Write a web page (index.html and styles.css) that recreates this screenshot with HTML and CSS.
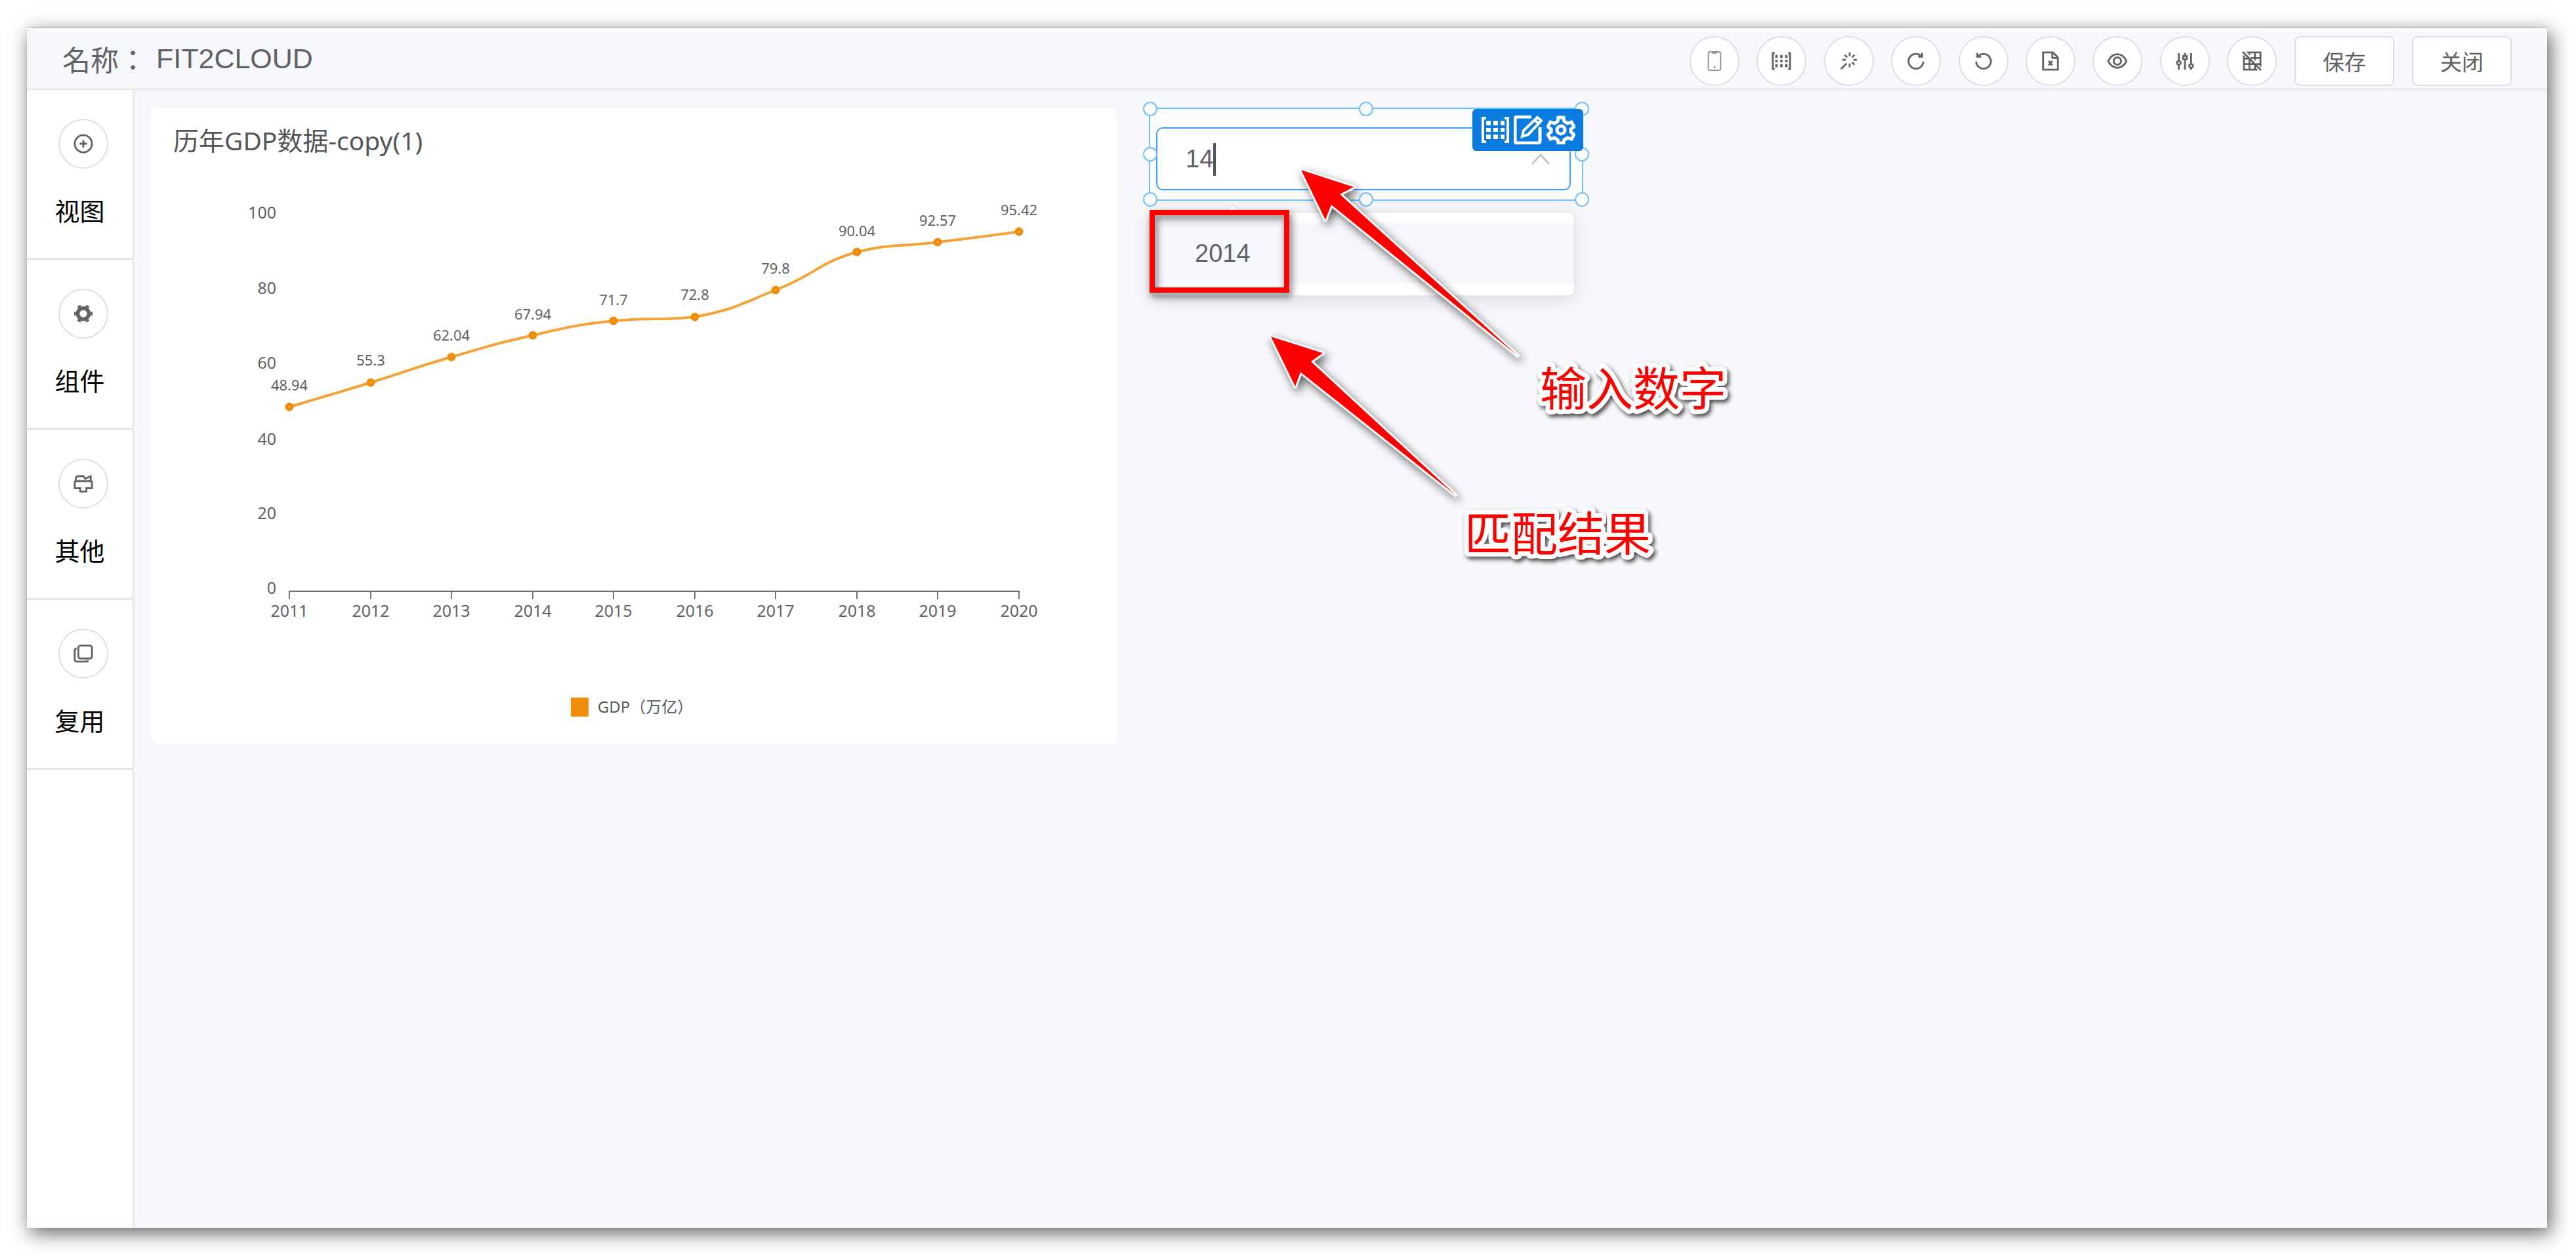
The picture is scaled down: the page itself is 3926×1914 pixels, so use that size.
FILE: index.html
```html
<!DOCTYPE html>
<html lang="zh-CN">
<head>
<meta charset="utf-8">
<meta name="viewport" content="width=device-width, initial-scale=1">
<title>FIT2CLOUD</title>
<link rel="stylesheet" href="styles.css">
</head>
<body>
<div class="window">
  <header class="topbar">
    <h1 class="topbar-title"><span class="topbar-label" lang="zh-TW">名称：</span><span>FIT2CLOUD</span></h1>
    <div class="topbar-tools">
      <div class="tool-group">
        <button class="round-btn" type="button" aria-label="移动端布局">
          <svg class="icon faint" viewBox="0 0 32 32"><rect x="6" y="1" width="20" height="30" rx="3"/><path d="M12 3h8M16 24v4M14.500 26h3"/></svg>
        </button>
        <button class="round-btn" type="button" aria-label="矩阵">
          <svg class="icon" viewBox="0 0 32 32"><path d="M5 3H2v26h3M27 3h3v26h-3"/><path class="solid" d="M6 6h4v5H6zM14 6h4v5h-4zM22 6h4v5h-4zM6 14h4v4H6zM14 14h4v4h-4zM22 14h4v4h-4zM6 21h4v5H6zM14 21h4v5h-4zM22 21h4v5h-4z"/></svg>
        </button>
        <button class="round-btn" type="button" aria-label="美化">
          <svg class="icon" viewBox="0 0 32 32"><path d="M3 29l9-9M17 2v6M17 20v6M5 14h6M23 14h6M9 6l4 4M25 6l-4 4M21 18l4 4"/></svg>
        </button>
        <button class="round-btn" type="button" aria-label="重做">
          <svg class="icon" viewBox="0 0 32 32"><path d="M28 17a12 12 0 1 1-4-9.500M26 3v6h-6"/></svg>
        </button>
        <button class="round-btn" type="button" aria-label="撤销">
          <svg class="icon" viewBox="0 0 32 32"><path d="M4 17a12 12 0 1 0 4-9.500M6 3v6h6"/></svg>
        </button>
        <button class="round-btn" type="button" aria-label="导出">
          <svg class="icon" viewBox="0 0 32 32"><path d="M4 2h16l8 8v20H4zM19 2v9h9M13 16l6 7M19 16l-6 7"/></svg>
        </button>
        <button class="round-btn" type="button" aria-label="预览">
          <svg class="icon" viewBox="0 0 32 32"><path d="M1 16C5 8 10 5 16 5s11 3 15 11c-4 8-9 11-15 11S5 24 1 16z"/><circle cx="16" cy="16" r="6"/></svg>
        </button>
        <button class="round-btn" type="button" aria-label="样式设置">
          <svg class="icon" viewBox="0 0 32 32"><path d="M6 3v13M6 22v8M16 3v5M16 14v16M26 3v18M26 27v3"/><circle cx="6" cy="19" r="3"/><rect x="13" y="8" width="6" height="5"/><circle cx="26" cy="24" r="3"/></svg>
        </button>
        <button class="round-btn" type="button" aria-label="关闭网格">
          <svg class="icon bold" viewBox="0 0 32 32"><path d="M8 2h22v23M3 7v23h22M3 12h8M3 21h17M12 2v4M12 14v16M21 2v13M21 23v7M14 11h16M23 21h7M1 1l30 30"/></svg>
        </button>
      </div>
      <button class="text-btn" type="button">保存</button>
      <button class="text-btn" type="button">关闭</button>
    </div>
  </header>

  <div class="workspace">
    <nav class="sidebar">
      <section class="side-item">
        <button class="round-btn" type="button" aria-labelledby="lab-view">
          <svg class="icon" viewBox="0 0 32 32"><circle cx="16" cy="16" r="14"/><path d="M16 10v12M10 16h12"/></svg>
        </button>
        <span class="side-label" id="lab-view">视图</span>
      </section>
      <section class="side-item">
        <button class="round-btn" type="button" aria-labelledby="lab-part">
          <svg class="icon" viewBox="0 0 32 32"><circle class="cog-ring" cx="16" cy="16" r="9"/><path class="cog-teeth" d="M28 16h3M1 16h3M22 5.600l1.500-2.600M8.500 29l1.500-2.600M22 26.400l1.500 2.600M8.500 3l1.500 2.600"/></svg>
        </button>
        <span class="side-label" id="lab-part">组件</span>
      </section>
      <section class="side-item">
        <button class="round-btn" type="button" aria-labelledby="lab-other">
          <svg class="icon" viewBox="0 0 32 32"><path d="M4 12V7a3 3 0 0 1 3-3h9l3 4 9-4v8M4 12h24a2 2 0 0 1 2 2v9h-9v6H11v-6H2v-9a2 2 0 0 1 2-2z"/></svg>
        </button>
        <span class="side-label" id="lab-other">其他</span>
      </section>
      <section class="side-item">
        <button class="round-btn" type="button" aria-labelledby="lab-reuse">
          <svg class="icon" viewBox="0 0 32 32"><rect x="8" y="3" width="22" height="21" rx="3"/><path d="M5 8a3 3 0 0 0-3 3v15a3 3 0 0 0 3 3h16a3 3 0 0 0 3-2"/></svg>
        </button>
        <span class="side-label" id="lab-reuse">复用</span>
      </section>
    </nav>

    <main class="canvas">
      <article class="chart-card">
        <h2 class="chart-title">历年GDP数据-copy(1)</h2>
        <svg class="chart" viewBox="0 0 1472 754" role="img" aria-label="历年GDP数据">
          <g class="axis-text y-axis">
            <text x="191" y="53">100</text>
            <text x="191" y="168">80</text>
            <text x="191" y="282">60</text>
            <text x="191" y="398">40</text>
            <text x="191" y="511">20</text>
            <text x="191" y="625">0</text>
          </g>
          <path class="axis-line" d="M211 633V621H1323V633M335 621v12M458 621v12M582 621v12M705 621v12M829 621v12M952 621v12M1076 621v12M1199 621v12"/>
          <g class="axis-text">
            <text x="211" y="660">2011</text>
            <text x="335" y="660">2012</text>
            <text x="458" y="660">2013</text>
            <text x="582" y="660">2014</text>
            <text x="705" y="660">2015</text>
            <text x="829" y="660">2016</text>
            <text x="952" y="660">2017</text>
            <text x="1076" y="660">2018</text>
            <text x="1199" y="660">2019</text>
            <text x="1323" y="660">2020</text>
          </g>
          <path class="series" d="M211 340C211 340 273 322 335 303C396 284 396 282 458 264C520 246 520 245 582 231C643 217 643 216 705 209C766 203 767 209 829 203C890 191 890 187 952 162C1014 138 1014 122 1076 104C1137 90 1137 97 1199 89C1261 82 1323 73 1323 73"/>
          <g class="marks">
            <circle cx="211" cy="340" r="4"/><circle cx="335" cy="303" r="4"/><circle cx="458" cy="264" r="4"/><circle cx="582" cy="231" r="4"/><circle cx="705" cy="209" r="4"/><circle cx="829" cy="203" r="4"/><circle cx="952" cy="162" r="4"/><circle cx="1076" cy="104" r="4"/><circle cx="1199" cy="89" r="4"/><circle cx="1323" cy="73" r="4"/>
          </g>
          <g class="value-text">
            <text x="211" y="315">48.94</text>
            <text x="335" y="277">55.3</text>
            <text x="458" y="239">62.04</text>
            <text x="582" y="207">67.94</text>
            <text x="705" y="185">71.7</text>
            <text x="829" y="177">72.8</text>
            <text x="952" y="137">79.8</text>
            <text x="1076" y="80">90.04</text>
            <text x="1199" y="64">92.57</text>
            <text x="1323" y="48">95.42</text>
          </g>
        </svg>
        <p class="legend"><i class="legend-mark"></i>GDP（万亿）</p>
      </article>

      <div class="filter">
        <div class="filter-frame">
          <input class="filter-input" type="text" value="14" aria-label="年份" role="combobox" aria-expanded="true" aria-controls="year-list">
          <span class="caret"></span>
          <svg class="chevron" viewBox="0 0 30 18"><path d="M2 16L15 2l13 14"/></svg>
          <i class="handle nw"></i><i class="handle n"></i><i class="handle ne"></i>
          <i class="handle w"></i><i class="handle e"></i>
          <i class="handle sw"></i><i class="handle s"></i><i class="handle se"></i>
          <div class="filter-tools">
            <button class="mini-btn" type="button" aria-label="矩阵">
              <svg viewBox="0 0 44 44"><path d="M8 4H3v36h5M36 4h5v36h-5"/><path class="solid" d="M8 8h7v7H8zM19 8h7v7h-7zM30 8h6v7h-6zM8 19h7v6H8zM19 19h7v6h-7zM30 19h6v6h-6zM8 29h7v7H8zM19 29h7v7h-7zM30 29h6v7h-6z"/></svg>
            </button>
            <button class="mini-btn" type="button" aria-label="编辑">
              <svg viewBox="0 0 44 44"><path class="thick" d="M27 2H5a3 3 0 0 0-3 3v34a3 3 0 0 0 3 3h32a3 3 0 0 0 3-3V18"/><path d="M13 32l2-9L36 3l6 5-20 21zM32 7l6 5"/></svg>
            </button>
            <button class="mini-btn" type="button" aria-label="设置">
              <svg viewBox="0 0 44 44"><path class="thick" d="M18 3h8l1 6 5 3 6-2 4 7-5 4v4l5 4-4 7-6-2-5 3-1 5h-8l-1-5-5-3-6 2-4-7 5-4v-4l-5-4 4-7 6 2 5-3z"/><circle class="thick" cx="22" cy="22" r="6"/></svg>
            </button>
          </div>
        </div>
        <ul class="dropdown" id="year-list" role="listbox">
          <li class="option" role="option" aria-selected="false">2014</li>
        </ul>
      </div>

      <svg class="notes" viewBox="0 0 1000 800" aria-hidden="true">
        <rect class="note-box" x="54" y="187" width="205" height="118"/>
        <path class="note-arrow" d="M281 122L361 148L340 159L611 405L327 175L318 198Z"/>
        <path class="note-arrow" d="M235 376L314 401L296 414L516 617L280 430L272 452Z"/>
        <text class="note-text" x="645" y="481">输入数字</text>
        <text class="note-text" x="530" y="702">匹配结果</text>
      </svg>
    </main>
  </div>
</div>
</body>
</html>
```
FILE: styles.css
```css
* { box-sizing: border-box; }

body {
  margin: 0;
  min-height: 100vh;
  padding: 42px 44px 43px 41px;
  display: flex;
  background: #fff;
  color: #606266;
  font-family: "Liberation Sans", "Noto Sans CJK SC", sans-serif;
}

button { font-family: inherit; cursor: pointer; }

.window {
  flex: 1;
  min-width: 0;
  display: flex;
  flex-direction: column;
  background: #f6f8fb;
  box-shadow: 5px 8px 28px rgba(0, 0, 0, .62), 0 -1px 1px rgba(0, 0, 0, .2);
}

/* top bar */
.topbar {
  display: flex;
  justify-content: space-between;
  align-items: flex-end;
  height: 95px;
  padding: 0 54px 4px;
  border-bottom: 2px solid #e4e6e8;
}

.topbar-title {
  display: flex;
  gap: 14px;
  align-items: center;
  margin: 0;
  font-size: 43px;
  font-weight: 400;
  line-height: 84px;
}
.topbar-label { font-family: "Noto Sans CJK TC", sans-serif; }

.topbar-tools { display: flex; gap: 27px; }

.tool-group {
  display: flex;
  justify-content: space-between;
  width: 895px;
}

.round-btn {
  display: flex;
  align-items: center;
  justify-content: center;
  width: 76px;
  height: 76px;
  padding: 0;
  border: 2px solid #dcdfe6;
  border-radius: 50%;
  background: #fff;
}

.text-btn {
  width: 152px;
  height: 76px;
  padding: 0;
  border: 2px solid #dcdfe6;
  border-radius: 8px;
  background: #fff;
  color: #606266;
  font-size: 33px;
}

.icon {
  width: 30px;
  height: 30px;
  fill: none;
  stroke: #606266;
  stroke-width: 3;
}
.icon.faint { stroke: #8d9096; stroke-width: 2; }
.icon .solid { fill: #606266; stroke: none; }
.icon .cog-ring { stroke-width: 6; }
.icon .cog-teeth { stroke-width: 6; }

/* side bar */
.workspace { flex: 1; display: flex; }

.sidebar {
  width: 163px;
  flex: none;
  background: #fff;
  border-right: 2px solid #e4e6e8;
}

.side-item {
  display: flex;
  flex-direction: column;
  align-items: center;
  gap: 38px;
  padding: 44px 0 42px;
  border-bottom: 3px solid #e4e5e7;
}
.side-item .round-btn { margin-left: 10px; }

.side-label {
  color: #000;
  font-size: 38px;
  line-height: 56px;
}

/* canvas */
.canvas {
  position: relative;
  flex: 1;
  min-width: 0;
  display: flex;
  align-items: flex-start;
  gap: 49px;
  padding: 27px 26px;
}

.chart-card {
  flex: 0 1 1472px;
  height: 970px;
  border-radius: 12px;
  background: #fff;
  color: #54565a;
  font-family: "Noto Sans", "Noto Sans CJK SC", sans-serif;
}

.chart-title {
  margin: 0;
  padding: 22px 34px 0;
  font-size: 39px;
  font-weight: 400;
  line-height: 56px;
}

.chart {
  display: block;
  width: 100%;
  margin-top: 38px;
}
.axis-text { fill: #606266; font-size: 25px; text-anchor: middle; }
.axis-text.y-axis { text-anchor: end; }
.axis-line { fill: none; stroke: #6e7079; stroke-width: 2; }
.series { fill: none; stroke: #f5a237; stroke-width: 4; }
.marks { fill: #f8b04e; stroke: #f08c0a; stroke-width: 5; }
.value-text { fill: #606266; font-size: 22px; text-anchor: middle; }

.legend {
  display: flex;
  align-items: center;
  justify-content: center;
  gap: 14px;
  margin: 27px 6px 0 0;
  font-size: 24px;
  line-height: 32px;
}
.legend-mark { width: 27px; height: 29px; background: #f08c0a; }

/* selected filter widget */
.filter { flex: 0 1 662px; }

.filter-frame {
  position: relative;
  height: 142px;
  padding: 28px 17px 14px 9px;
  border: 2px solid #70c0ff;
  background: #fdfeff;
}

.filter-input {
  display: block;
  width: 100%;
  height: 96px;
  padding: 0 43px;
  border: 2px solid #409eff;
  border-radius: 10px;
  background: #fff;
  color: #606266;
  font: 38px "Liberation Sans", sans-serif;
  outline: none;
}

.caret {
  position: absolute;
  left: 96px;
  top: 52px;
  width: 4px;
  height: 50px;
  background: #54565a;
}

.chevron {
  position: absolute;
  right: 48px;
  top: 68px;
  width: 30px;
  height: 18px;
  fill: none;
  stroke: #c0c4cc;
  stroke-width: 3;
}

.handle {
  position: absolute;
  width: 22px;
  height: 22px;
  margin: -11px;
  border: 2px solid #70c0ff;
  border-radius: 50%;
  background: #fff;
}
.handle.nw, .handle.n, .handle.ne { top: 0; }
.handle.w, .handle.e { top: 50%; }
.handle.sw, .handle.s, .handle.se { top: 100%; }
.handle.nw, .handle.w, .handle.sw { left: 0; }
.handle.n, .handle.s { left: 50%; }
.handle.ne, .handle.e, .handle.se { left: 100%; }

.filter-tools {
  position: absolute;
  right: -2px;
  top: 0;
  display: flex;
  align-items: center;
  justify-content: center;
  gap: 6px;
  width: 169px;
  height: 64px;
  border-radius: 6px;
  background: #0a7be0;
}

.mini-btn {
  display: flex;
  padding: 0;
  border: 0;
  background: none;
}
.mini-btn svg {
  width: 44px;
  height: 44px;
  fill: none;
  stroke: #fff;
  stroke-width: 4;
}
.mini-btn .thick { stroke-width: 5; }
.mini-btn .solid { fill: #fff; stroke: none; }

.dropdown {
  position: relative;
  width: 648px;
  max-width: 100%;
  margin: 16px 0 0 2px;
  padding: 16px 0 18px;
  list-style: none;
  border: 2px solid #e4e7ed;
  border-radius: 10px;
  background: #fff;
  box-shadow: 0 6px 32px rgba(0, 0, 0, .1);
}
.dropdown::before {
  content: "";
  position: absolute;
  left: 114px;
  top: -10px;
  width: 18px;
  height: 18px;
  border: 2px solid #e4e7ed;
  border-width: 2px 0 0 2px;
  background: #fff;
  transform: rotate(45deg);
}

.option {
  position: relative;
  padding: 0 66px;
  background: #f5f7fa;
  font-size: 38px;
  line-height: 92px;
}

/* annotations drawn over the canvas */
.notes {
  position: absolute;
  left: 1498px;
  top: 0;
  width: 1000px;
  height: 800px;
  pointer-events: none;
}
.note-box {
  fill: none;
  stroke: #f00;
  stroke-width: 8;
  filter: drop-shadow(3px 6px 6px rgba(0, 0, 0, .6));
}
.note-arrow {
  fill: #f00;
  stroke: #fff;
  stroke-width: 6;
  stroke-linejoin: round;
  paint-order: stroke;
  filter: drop-shadow(4px 6px 7px rgba(0, 0, 0, .6));
}
.note-text {
  fill: #f00;
  stroke: #fff;
  stroke-width: 14;
  stroke-linejoin: round;
  paint-order: stroke;
  font-family: "Liberation Serif", "Noto Sans CJK SC", serif;
  font-size: 71px;
  filter: drop-shadow(3px 4px 3px rgba(0, 0, 0, .7));
}
```
